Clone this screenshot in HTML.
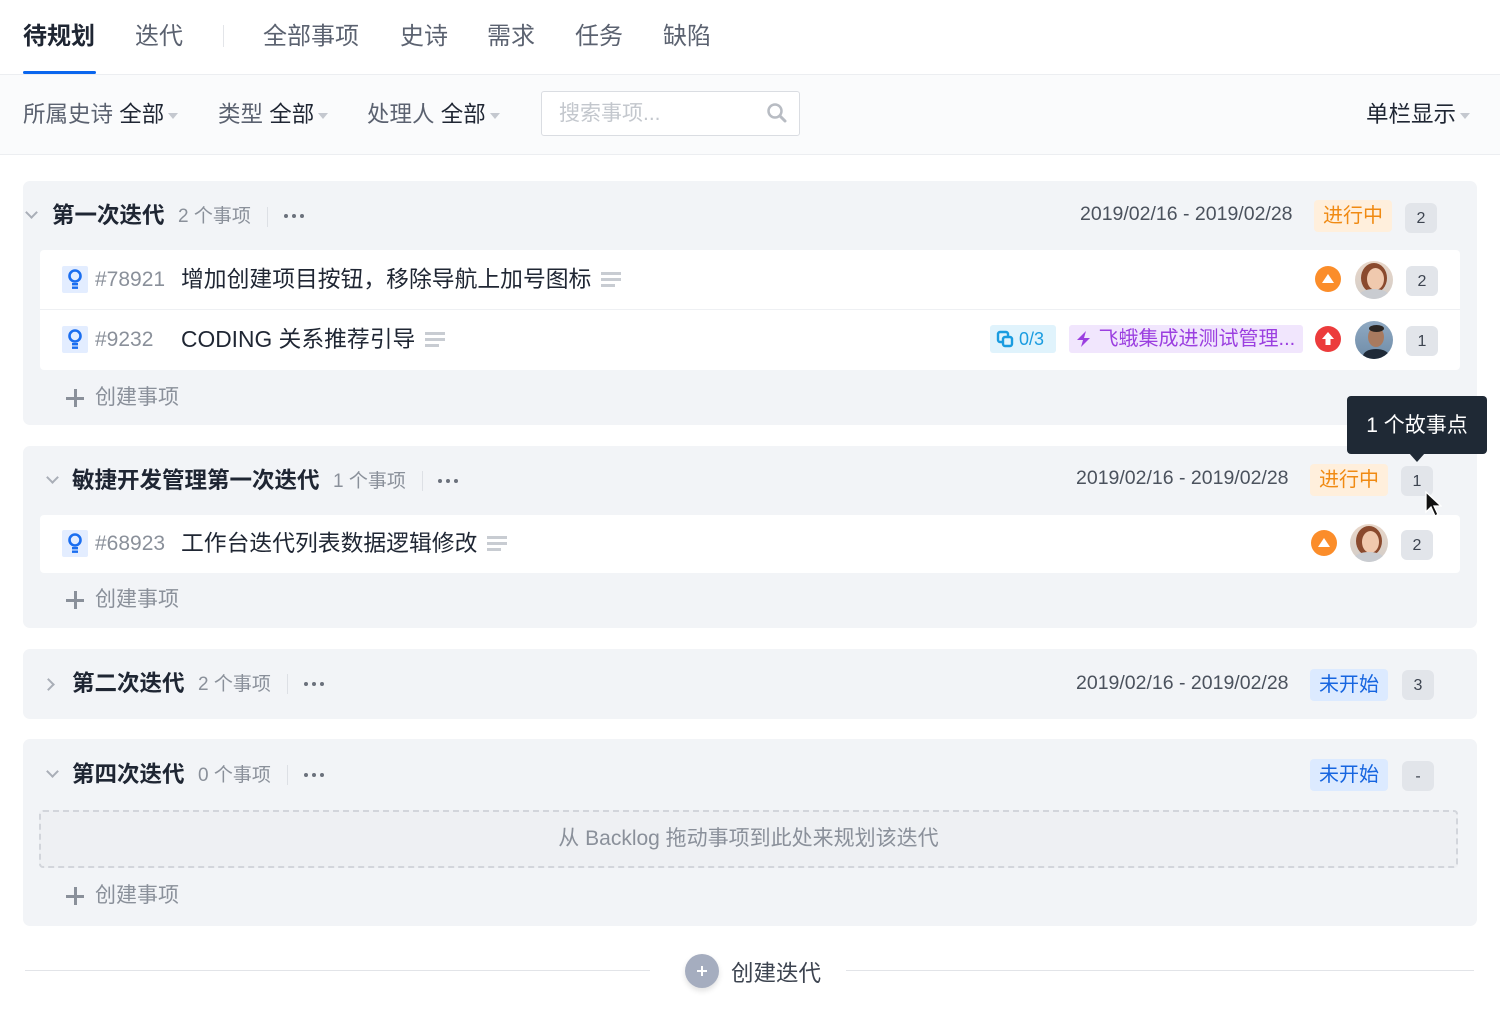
<!DOCTYPE html>
<html><head><meta charset="utf-8"><style>
*{margin:0;padding:0;box-sizing:border-box}
body{width:1500px;height:1020px;background:#fff;font-family:"Liberation Sans","Noto Sans CJK SC",sans-serif;position:relative;overflow:hidden;color:#1f2633}
.a{position:absolute;white-space:nowrap}
.tab{font-size:24px;color:#5b6270;top:22px;line-height:30px}
.flt{font-size:22.5px;color:#5b6270;top:100px;line-height:30px}
.flt b{font-weight:normal;color:#1f2633}
.caret{display:inline-block;width:0;height:0;border-left:5px solid transparent;border-right:5px solid transparent;border-top:6px solid #c4c8cf;vertical-align:middle;margin-left:4px}
.grp{position:absolute;left:23px;width:1454px;background:#f2f4f7;border-radius:7px}
.chev{position:absolute;width:9px;height:9px;border-right:2px solid #a9aeb7;border-bottom:2px solid #a9aeb7}
.title{font-size:22.5px;font-weight:bold;color:#1f2633;line-height:30px}
.cnt{font-size:19px;color:#8a909a;line-height:30px}
.vs{position:absolute;width:1px;height:20px;background:#dde0e5}
.dots{position:absolute;width:20px;height:4px}
.dots i{float:left;width:4px;height:4px;border-radius:50%;background:#6b717c;margin-right:4px}
.date{font-size:19.5px;color:#4b525d;line-height:30px}
.badge{position:absolute;height:32px;border-radius:4px;font-size:20px;line-height:32px;text-align:center}
.orange{background:#ffefdc;color:#f08a12}
.blue{background:#dceaff;color:#1665e0}
.num{position:absolute;width:32px;height:30px;background:#e2e5ea;border-radius:6px;font-size:16px;color:#3d4450;text-align:center;line-height:32px}
.card{position:absolute;left:40px;width:1420px;background:#fff;border-radius:4px}
.row{position:absolute;left:0;width:1420px;height:60px}
.ico{position:absolute;left:22px;top:16px;width:26px;height:27px;background:#e3edff;border-radius:2px}
.id{position:absolute;left:55px;top:15px;font-size:21px;color:#8a909a;line-height:30px}
.tt{position:absolute;left:141px;top:14px;font-size:22.8px;color:#1f2633;line-height:30px}
.lines{display:inline-block;width:20px;height:14px;margin-left:10px;vertical-align:middle;position:relative;top:-2px}
.lines i{display:block;height:3px;background:#c8ccd2;margin-bottom:3px}
.create{font-size:21px;color:#8a909a;line-height:30px}
.av{position:absolute;width:38px;height:38px;border-radius:50%;overflow:hidden}
.pri{position:absolute;width:26px;height:26px;border-radius:50%}
</style></head><body>

<div class="a tab" style="left:23px;color:#1f2633;font-weight:bold">待规划</div>
<div class="a tab" style="left:135px">迭代</div>
<div class="a" style="left:223px;top:25px;width:1px;height:22px;background:#e3e5e9"></div>
<div class="a tab" style="left:263px">全部事项</div>
<div class="a tab" style="left:400px">史诗</div>
<div class="a tab" style="left:487px">需求</div>
<div class="a tab" style="left:575px">任务</div>
<div class="a tab" style="left:663px">缺陷</div>
<div class="a" style="left:23px;top:71px;width:73px;height:3px;background:#0a66ee;border-radius:2px"></div>

<div class="a" style="left:0;top:74px;width:1500px;height:81px;background:#fafbfc;border-top:1px solid #eceef1;border-bottom:1px solid #eceef1"></div>
<div class="a flt" style="left:23px">所属史诗 <b>全部</b><span class="caret"></span></div>
<div class="a flt" style="left:218px">类型 <b>全部</b><span class="caret"></span></div>
<div class="a flt" style="left:367px">处理人 <b>全部</b><span class="caret"></span></div>
<div class="a" style="left:541px;top:91px;width:259px;height:45px;background:#fff;border:1px solid #dadde2;border-radius:3px"></div>
<div class="a" style="left:559px;top:100px;font-size:21px;color:#c3c7cd;line-height:28px">搜索事项...</div>
<svg class="a" style="left:766px;top:102px" width="22" height="22" viewBox="0 0 22 22"><circle cx="9" cy="9" r="6.5" fill="none" stroke="#b8bcc3" stroke-width="2.5"/><path d="M14 14l5 5" stroke="#b8bcc3" stroke-width="3" stroke-linecap="round"/></svg>
<div class="a flt" style="left:1366px;color:#1f2633">单栏显示<span class="caret"></span></div>

<!-- group 1 -->
<div class="grp" style="top:181px;height:244px"></div>
<div class="chev" style="left:27px;top:208px;transform:rotate(45deg)"></div>
<div class="a title" style="left:52px;top:201px">第一次迭代</div>
<div class="a cnt" style="left:178px;top:202px">2 个事项</div>
<div class="vs" style="left:267px;top:207px"></div>
<div class="dots" style="left:284px;top:214px"><i></i><i></i><i style="margin:0"></i></div>
<div class="a date" style="left:1080px;top:199px">2019/02/16 - 2019/02/28</div>
<div class="badge orange" style="left:1314px;top:200px;width:78px">进行中</div>
<div class="num" style="left:1405px;top:203px">2</div>

<div class="card" style="top:250px;height:120px">
  <div class="row" style="top:0;border-bottom:1px solid #eef0f3">
    <div class="ico"><svg width="26" height="27" viewBox="0 0 26 27"><circle cx="13" cy="10" r="5.5" fill="none" stroke="#1a6ef0" stroke-width="2.6"/><rect x="10" y="17" width="6" height="2.4" fill="#1a6ef0"/><rect x="10" y="20.5" width="6" height="2.4" fill="#1a6ef0"/></svg></div>
    <div class="id">#78921</div>
    <div class="tt">增加创建项目按钮，移除导航上加号图标<span class="lines"><i></i><i></i><i style="width:70%"></i></span></div>
    <div class="pri" style="left:1275px;top:16px;background:#fb8d2a"><svg width="26" height="26"><path d="M13 8l6 9H7z" fill="#fff"/></svg></div>
    <div class="av" style="left:1315px;top:11px;background:linear-gradient(#e8d6c8,#d3cdc8)"><div style="position:absolute;left:6px;top:2px;width:26px;height:30px;border-radius:50%;background:#8a4a2e"></div><div style="position:absolute;left:12px;top:7px;width:17px;height:22px;border-radius:50%;background:#f0c9ae"></div><div style="position:absolute;left:4px;top:28px;width:30px;height:14px;border-radius:50%;background:#c9ccd1"></div></div>
    <div class="num" style="left:1366px;top:16px">2</div>
  </div>
  <div class="row" style="top:60px">
    <div class="ico"><svg width="26" height="27" viewBox="0 0 26 27"><circle cx="13" cy="10" r="5.5" fill="none" stroke="#1a6ef0" stroke-width="2.6"/><rect x="10" y="17" width="6" height="2.4" fill="#1a6ef0"/><rect x="10" y="20.5" width="6" height="2.4" fill="#1a6ef0"/></svg></div>
    <div class="id">#9232</div>
    <div class="tt">CODING 关系推荐引导<span class="lines"><i></i><i></i><i style="width:70%"></i></span></div>
    <div class="a" style="left:950px;top:15px;width:66px;height:28px;background:#e0f3fc;border-radius:3px;font-size:18px;color:#1a9ce0;line-height:28px;padding-left:6px"><svg width="18" height="18" viewBox="0 0 18 18" style="vertical-align:-3px"><rect x="2" y="2" width="10" height="10" rx="2" fill="none" stroke="#1a9ce0" stroke-width="2.4"/><rect x="7" y="7" width="9" height="9" rx="2" fill="#e0f3fc" stroke="#1a9ce0" stroke-width="2.4"/></svg> 0/3</div>
    <div class="a" style="left:1029px;top:15px;width:234px;height:28px;background:#f1e6fd;border-radius:3px;font-size:20px;color:#9b3fe0;line-height:28px;padding-left:6px;overflow:hidden"><svg width="18" height="18" viewBox="0 0 18 18" style="vertical-align:-3px"><path d="M11 1L2 10h6l-2 7 9-9H9z" fill="#9b3fe0"/></svg> 飞蛾集成进测试管理...</div>
    <div class="pri" style="left:1275px;top:16px;background:#ec3c3c"><svg width="26" height="26"><path d="M13 6l6 7h-3.5v6h-5v-6H7z" fill="#fff"/></svg></div>
    <div class="av" style="left:1315px;top:11px;background:linear-gradient(#8fa9c2,#6f8ca8)"><div style="position:absolute;left:13px;top:6px;width:16px;height:20px;border-radius:50%;background:#a87a5f"></div><div style="position:absolute;left:14px;top:4px;width:15px;height:7px;border-radius:50%;background:#2b2623"></div><div style="position:absolute;left:8px;top:28px;width:26px;height:14px;border-radius:50%;background:#1f2a38"></div></div>
    <div class="num" style="left:1366px;top:16px">1</div>
  </div>
</div>
<div class="a" style="left:66px;top:397px;width:18px;height:2.5px;background:#8a909a"></div>
<div class="a" style="left:74px;top:389px;width:2.5px;height:18px;background:#8a909a"></div>
<div class="a create" style="left:95px;top:383px">创建事项</div>

<!-- group 2 -->
<div class="grp" style="top:446px;height:182px"></div>
<div class="chev" style="left:48px;top:473px;transform:rotate(45deg)"></div>
<div class="a title" style="left:72px;top:466px">敏捷开发管理第一次迭代</div>
<div class="a cnt" style="left:333px;top:467px">1 个事项</div>
<div class="vs" style="left:422px;top:471px"></div>
<div class="dots" style="left:438px;top:479px"><i></i><i></i><i style="margin:0"></i></div>
<div class="a date" style="left:1076px;top:463px">2019/02/16 - 2019/02/28</div>
<div class="badge orange" style="left:1310px;top:464px;width:78px">进行中</div>
<div class="num" style="left:1401px;top:466px">1</div>

<div class="card" style="top:515px;height:58px">
  <div class="row" style="top:-1px">
    <div class="ico"><svg width="26" height="27" viewBox="0 0 26 27"><circle cx="13" cy="10" r="5.5" fill="none" stroke="#1a6ef0" stroke-width="2.6"/><rect x="10" y="17" width="6" height="2.4" fill="#1a6ef0"/><rect x="10" y="20.5" width="6" height="2.4" fill="#1a6ef0"/></svg></div>
    <div class="id">#68923</div>
    <div class="tt">工作台迭代列表数据逻辑修改<span class="lines"><i></i><i></i><i style="width:70%"></i></span></div>
    <div class="pri" style="left:1271px;top:16px;background:#fb8d2a"><svg width="26" height="26"><path d="M13 8l6 9H7z" fill="#fff"/></svg></div>
    <div class="av" style="left:1310px;top:10px;background:linear-gradient(#e8d6c8,#d3cdc8)"><div style="position:absolute;left:6px;top:2px;width:26px;height:30px;border-radius:50%;background:#8a4a2e"></div><div style="position:absolute;left:12px;top:7px;width:17px;height:22px;border-radius:50%;background:#f0c9ae"></div><div style="position:absolute;left:4px;top:28px;width:30px;height:14px;border-radius:50%;background:#c9ccd1"></div></div>
    <div class="num" style="left:1361px;top:16px">2</div>
  </div>
</div>
<div class="a" style="left:66px;top:599px;width:18px;height:2.5px;background:#8a909a"></div>
<div class="a" style="left:74px;top:591px;width:2.5px;height:18px;background:#8a909a"></div>
<div class="a create" style="left:95px;top:585px">创建事项</div>

<!-- tooltip -->
<div class="a" style="left:1347px;top:396px;width:140px;height:58px;background:#1f2935;border-radius:4px;color:#fff;font-size:21px;line-height:60px;text-align:center">1 个故事点</div>
<div class="a" style="left:1409px;top:453px;width:0;height:0;border-left:8px solid transparent;border-right:8px solid transparent;border-top:9px solid #1f2935"></div>
<svg class="a" style="left:1424px;top:490px" width="18" height="28" viewBox="0 0 18 28"><path d="M2 2v20l5-5 4 9 3-1.5-4-8.5h7z" fill="#111" stroke="#fff" stroke-width="1.3"/></svg>

<!-- group 3 -->
<div class="grp" style="top:649px;height:70px"></div>
<div class="chev" style="left:44px;top:680px;transform:rotate(-45deg)"></div>
<div class="a title" style="left:72px;top:669px">第二次迭代</div>
<div class="a cnt" style="left:198px;top:670px">2 个事项</div>
<div class="vs" style="left:287px;top:674px"></div>
<div class="dots" style="left:304px;top:682px"><i></i><i></i><i style="margin:0"></i></div>
<div class="a date" style="left:1076px;top:668px">2019/02/16 - 2019/02/28</div>
<div class="badge blue" style="left:1310px;top:669px;width:78px">未开始</div>
<div class="num" style="left:1402px;top:670px">3</div>

<!-- group 4 -->
<div class="grp" style="top:739px;height:187px"></div>
<div class="chev" style="left:48px;top:767px;transform:rotate(45deg)"></div>
<div class="a title" style="left:72px;top:760px">第四次迭代</div>
<div class="a cnt" style="left:198px;top:761px">0 个事项</div>
<div class="vs" style="left:287px;top:765px"></div>
<div class="dots" style="left:304px;top:773px"><i></i><i></i><i style="margin:0"></i></div>
<div class="badge blue" style="left:1310px;top:759px;width:78px">未开始</div>
<div class="num" style="left:1402px;top:761px">-</div>
<div class="a" style="left:39px;top:810px;width:1419px;height:58px;border:2px dashed #d2d5db;border-radius:4px;background:#eef0f3"></div>
<div class="a" style="left:39px;top:824px;width:1419px;text-align:center;font-size:21px;color:#8a909a;line-height:30px">从 Backlog 拖动事项到此处来规划该迭代</div>
<div class="a" style="left:66px;top:895px;width:18px;height:2.5px;background:#8a909a"></div>
<div class="a" style="left:74px;top:887px;width:2.5px;height:18px;background:#8a909a"></div>
<div class="a create" style="left:95px;top:881px">创建事项</div>

<!-- bottom -->
<div class="a" style="left:25px;top:970px;width:625px;height:1px;background:#e2e4e8"></div>
<div class="a" style="left:846px;top:970px;width:628px;height:1px;background:#e2e4e8"></div>
<div class="a" style="left:685px;top:954px;width:34px;height:34px;border-radius:50%;background:#a5adbf;box-shadow:0 3px 6px rgba(0,0,0,.12)"></div>
<div class="a" style="left:697px;top:970px;width:10px;height:2px;background:#fff"></div>
<div class="a" style="left:701px;top:966px;width:2px;height:10px;background:#fff"></div>
<div class="a" style="left:731px;top:959px;font-size:22.5px;color:#3d4450;line-height:30px">创建迭代</div>
</body></html>
